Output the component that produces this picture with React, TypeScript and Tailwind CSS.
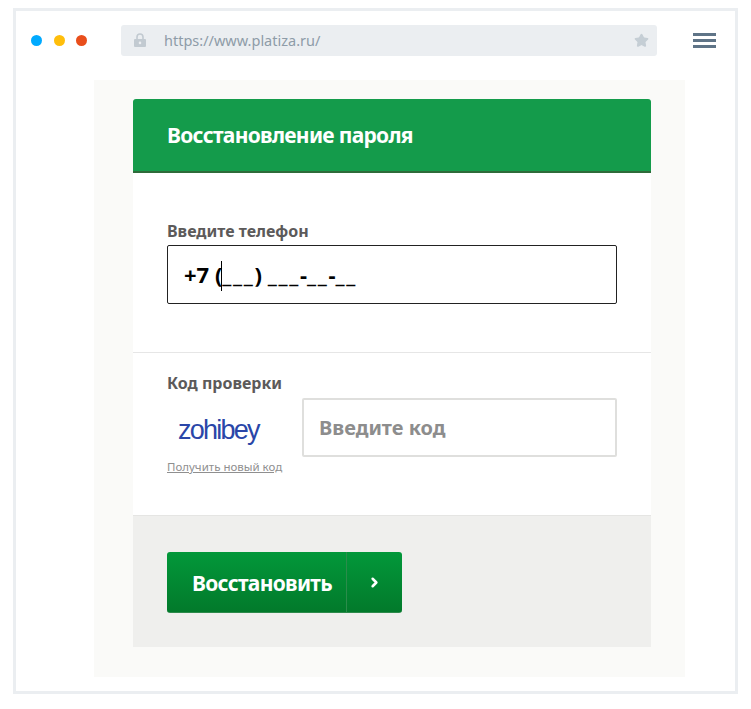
import React from 'react';
import { Star, ChevronRight } from 'lucide-react';

const font = { fontFamily: '"Noto Sans", sans-serif' };

const App: React.FC = () => {
  return (
    <div className="w-[751px] h-[709px] bg-white pt-2 pl-[13px] font-['Noto_Sans',sans-serif]">
      <div className="w-[725px] h-[686px] border-[3px] border-[#ebeef1] bg-white">
        {/* Browser bar */}
        <div className="h-[69px] flex items-start pt-[14px]">
          <div className="w-[105px] h-[31px] pl-[15px] flex items-center">
            <span className="w-[11px] h-[11px] rounded-full bg-[#00aaff]" />
            <span className="w-[11px] h-[11px] rounded-full bg-[#ffbe0b] ml-[12px]" />
            <span className="w-[11px] h-[11px] rounded-full bg-[#e94e1b] ml-[11px]" />
          </div>
          <div className="w-[536px] h-[31px] rounded-[3px] bg-[#ebeef1] flex items-center pl-[13px] pr-[8px]">
            <svg width="12" height="14" viewBox="0 0 12 14" className="-mt-[1px]">
              <path d="M3 6V4a3 3 0 0 1 6 0v2" fill="none" stroke="#c2cad1" strokeWidth="1.6" />
              <path fillRule="evenodd" d="M1 6h10a1 1 0 0 1 1 1v6a1 1 0 0 1-1 1H1a1 1 0 0 1-1-1V7a1 1 0 0 1 1-1zm5 2.6a1.3 1.3 0 1 0 0 2.6 1.3 1.3 0 0 0 0-2.6z" fill="#c2cad1" />
            </svg>
            <span className="ml-[18px] text-[14.5px] text-[#8e9ca8]">https://www.platiza.ru/</span>
            <Star size={15} className="ml-auto text-[#c5ced5] fill-[#c5ced5]" />
          </div>
          <div className="ml-[36px] w-[23px] h-[31px] flex flex-col justify-center gap-[3px]">
            <span className="h-[3px] bg-[#5f7487]" />
            <span className="h-[3px] bg-[#5f7487]" />
            <span className="h-[3px] bg-[#5f7487]" />
          </div>
        </div>

        {/* Page */}
        <div className="ml-[78px] w-[591px] h-[597px] bg-[#fafaf8] pt-[19px] pl-[39px]">
          <div className="w-[518px] h-[548px] bg-white flex flex-col">
            <div className="h-[74px] bg-[#149b4b] border-b-2 border-[#2f6b3a] rounded-t-[3px] flex items-center pl-[34px]">
              <h1 className="text-[21px] leading-none font-bold text-white tracking-[-0.7px]">Восстановление пароля</h1>
            </div>

            <div className="h-[180px] border-b border-[#e6e6e6] pt-[49px] px-[34px]">
              <div className="text-[16px] leading-[18px] font-bold text-[#5c5a5a]">Введите телефон</div>
              <div className="mt-[5px] w-[450px] h-[59px] border-[1.5px] border-[#222] rounded-[2px] flex items-center pl-[16px] pb-[2px]">
                <span className="relative text-[22px] font-bold text-black leading-none">
                  +7 (<span className="tracking-[1.7px]">___</span>) <span className="tracking-[1.7px]">___</span>-<span className="tracking-[1.7px]">__</span>-<span className="tracking-[1.7px]">__</span>
                  <span className="absolute left-[37px] -top-[2px] w-px h-[30px] bg-black" />
                </span>
              </div>
            </div>

            <div className="h-[163px] border-b border-[#e5e5e3] pt-[20px] px-[34px] flex flex-col">
              <div className="text-[16px] leading-[20px] font-bold text-[#5c5a5a]">Код проверки</div>
              <div className="flex">
                <div className="w-[135px]">
                  <div className="h-[66px] pl-[11px] pt-[19px] text-[27px] leading-[36px] tracking-[-1.75px] text-[#2a46a8] font-['Liberation_Sans',sans-serif]">
                    zohibey
                  </div>
                  <a className="block text-[11.5px] leading-[16px] text-[#8f8f8f] underline whitespace-nowrap">
                    Получить новый код
                  </a>
                </div>
                <div className="mt-[5px] w-[315px] h-[59px] border-2 border-[#dfdfdd] rounded-[2px] flex items-center pl-[15px]">
                  <span className="text-[20px] font-bold text-[#8d8d8d] leading-none">Введите код</span>
                </div>
              </div>
            </div>

            <div className="flex-1 bg-[#efefed] pt-[36px] pl-[34px]">
              <button
                style={font}
                className="w-[235px] h-[61px] rounded-[3px] bg-gradient-to-b from-[#02983a] to-[#027a2b] border-b border-[#2d8a4b] flex items-stretch"
              >
                <span className="w-[180px] flex items-center justify-center pl-[11px] pt-[3px] text-[21px] font-bold text-white border-r border-[#2b8c4b] tracking-[-0.7px]">
                  Восстановить
                </span>
                <span className="flex-1 flex items-center justify-center">
                  <ChevronRight size={15} strokeWidth={4} className="text-white" />
                </span>
              </button>
            </div>
          </div>
        </div>
      </div>
    </div>
  );
};

export default App;
